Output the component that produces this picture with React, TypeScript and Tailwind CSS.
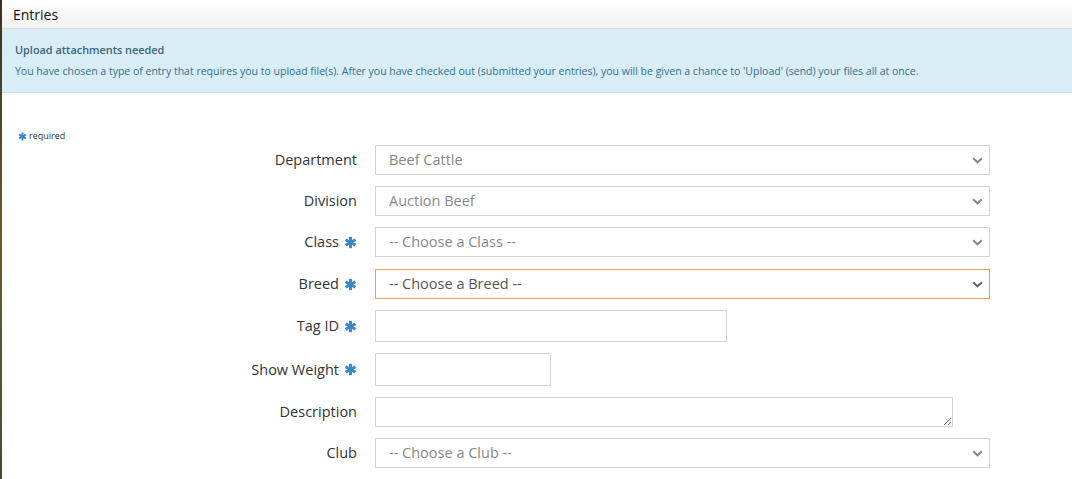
import { ReactNode } from 'react';

const Star = ({ className = 'h-[13px] w-[13px]' }: { className?: string }) => (
  <svg viewBox="0 0 16 16" className={className} aria-hidden>
    <g stroke="#3a87c8" strokeWidth="3.6" strokeLinecap="butt">
      <line x1="8" y1="1" x2="8" y2="15" />
      <line x1="1.9" y1="4.5" x2="14.1" y2="11.5" />
      <line x1="1.9" y1="11.5" x2="14.1" y2="4.5" />
    </g>
  </svg>
);

const Chevron = ({ dark }: { dark?: boolean }) => (
  <svg viewBox="0 0 12 8" className="h-[7px] w-[11px]" aria-hidden>
    <path
      d="M1 1.5 L6 6 L11 1.5"
      fill="none"
      stroke={dark ? '#666' : '#888'}
      strokeWidth="2.4"
    />
  </svg>
);

const Row = ({
  label,
  required,
  extra = '',
  children
}: {
  label: string;
  required?: boolean;
  extra?: string;
  children: ReactNode;
}) => (
  <div className={'flex items-center ' + extra}>
    <div className="flex w-[357px] items-center justify-end gap-[5px] text-[14.5px] text-[#333]">
      <span>{label}</span>
      {required && <Star />}
    </div>
    <div className="ml-[18px] flex">{children}</div>
  </div>
);

const Select = ({ value, focus }: { value: string; focus?: boolean }) => (
  <div
    className={
      focus
        ? 'flex h-[30px] w-[615px] items-center justify-between border border-[#f0a050] bg-white pl-[13px] pr-[6px] text-[14.5px] text-[#555]'
        : 'flex h-[30px] w-[615px] items-center justify-between border border-[#d4d4d4] bg-white pl-[13px] pr-[6px] text-[14.5px] text-[#888]'
    }
  >
    <span>{value}</span>
    <Chevron dark={focus} />
  </div>
);

export default function App() {
  return (
    <div
      className="flex min-h-[479px] w-[1072px] bg-white"
      style={{ fontFamily: '"Open Sans", "Liberation Sans", sans-serif' }}
    >
      <div className="w-[2px] shrink-0 bg-gradient-to-b from-[#3a3020] via-[#6b5a2a] to-[#4a4a30]" />
      <div className="flex min-w-0 flex-1 flex-col">
        <div className="flex h-[29px] items-center border-b border-[#dcdcdc] bg-gradient-to-b from-white to-[#f1f1f1] pl-[11px] text-[14px] text-[#111]">
          Entries
        </div>
        <div className="h-[64px] border-b border-[#b7e4ef] bg-[#d9edf7] pl-[13px] pt-[13px] text-[#31708f]">
          <div className="text-[10.9px] font-semibold leading-[16px] text-[#3b6680]">
            Upload attachments needed
          </div>
          <div className="mt-[5px] text-[10.5px] leading-[16px]">
            You have chosen a type of entry that requires you to upload file(s). After you have checked out (submitted your entries), you will be given a chance to 'Upload' (send) your files all at once.
          </div>
        </div>
        <div className="flex items-center gap-[2px] pl-[16px] pt-[37px] text-[9px] leading-[12px] text-[#333]">
          <Star className="h-[9px] w-[9px]" />
          <span>required</span>
        </div>
        <div className="-ml-[2px] mt-[3px] flex flex-col gap-[11px]">
          <Row label="Department">
            <Select value="Beef Cattle" />
          </Row>
          <Row label="Division">
            <Select value="Auction Beef" />
          </Row>
          <Row label="Class" required>
            <Select value="-- Choose a Class --" />
          </Row>
          <Row label="Breed" required extra="mt-[1px]">
            <Select value="-- Choose a Breed --" focus />
          </Row>
          <Row label="Tag ID" required>
            <input className="h-[32px] w-[352px] border border-[#d4d4d4] bg-white px-3 text-[14px] outline-none" />
          </Row>
          <Row label="Show Weight" required>
            <input className="h-[33px] w-[176px] border border-[#d4d4d4] bg-white px-3 text-[14px] outline-none" />
          </Row>
          <Row label="Description">
            <textarea className="block h-[30px] w-[578px] border border-[#d4d4d4] bg-white px-3 text-[14px] outline-none" />
          </Row>
          <Row label="Club">
            <Select value="-- Choose a Club --" />
          </Row>
        </div>
      </div>
    </div>
  );
}
